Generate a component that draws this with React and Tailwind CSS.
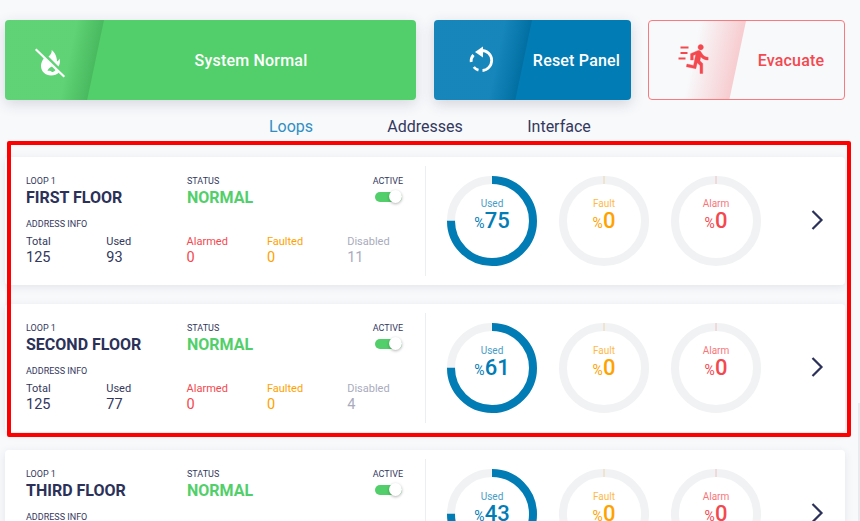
import React from "react";

const font = { fontFamily: "Roboto, 'Liberation Sans', sans-serif" };

function FlameOff() {
  return (
    <svg width="34" height="34" viewBox="0 0 34 34" className="text-white mt-[6px]">
      <path fill="currentColor" d="M18.700 4C19 7 17.500 9 15.500 10.500L25.500 20.500C27.500 17 27 15 26.500 12.500C26 14 25 15 24 15.500C24 11 22 6.500 18.700 4Z" />
      <path fill="currentColor" fillRule="evenodd" d="M10 13.500C8.500 16 8 18 8 20C8 25.500 12.500 29.500 18 29.500C21.500 29.500 24 28.300 26 26.500L11 12ZM14.500 25C15 22.500 17 21.500 19 20.500L22.500 24C21.500 25.500 20 26 19 26C18 25 16 24.500 14.500 25Z" />
      <path d="M2.700 3.300L31.300 30.700" stroke="currentColor" strokeWidth="2.200" fill="none" />
    </svg>
  );
}

function ReplayIcon() {
  return (
    <svg width="32" height="32" viewBox="0 0 32 32" fill="none" className="text-white">
      <path d="M18 2.500v11L10 8z" fill="currentColor" />
      <path d="M16.500 6.500C22 6.500 26.700 10.800 26.700 16.300C26.700 21.800 22.300 26.300 17.500 26.500" stroke="currentColor" strokeWidth="2.800" />
      <path d="M13.500 26.200C11.500 25.700 10 24.500 8.800 23" stroke="currentColor" strokeWidth="2.800" />
      <path d="M6.200 18C5.900 15.500 6.700 13 8.500 11" stroke="currentColor" strokeWidth="2.800" />
    </svg>
  );
}

function RunIcon() {
  return (
    <svg width="32" height="32" viewBox="0 0 32 32" className="text-[#f4484f]">
      <g transform="translate(4.500 -1.500) scale(1.350)" fill="currentColor" stroke="currentColor" strokeWidth="0.300">
        <path d="M13.490 5.480c1.100 0 2-.9 2-2s-.9-2-2-2-2 .9-2 2 .9 2 2 2zm-3.600 13.900l1-4.400 2.100 2v6h2v-7.500l-2.100-2 .6-3c1.300 1.500 3.300 2.500 5.500 2.500v-2c-1.900 0-3.500-1-4.300-2.400l-1-1.600c-.4-.6-1-1-1.700-1-.3 0-.5.1-.8.1l-5.200 2.200v4.700h2v-3.400l1.800-.7-1.600 8.100-4.900-1-.4 2 7 1.400z" />
      </g>
      <path d="M2.500 3.500h8M2.500 9h7M0.500 14.500h7" stroke="currentColor" strokeWidth="2" fill="none" />
    </svg>
  );
}

function Ring({ pct, arc, label, color, tick }) {
  const r = 41;
  const c = 2 * Math.PI * r;
  return (
    <div className="relative w-[90px] h-[90px] shrink-0">
      <svg width="90" height="90" viewBox="0 0 90 90">
        <circle cx="45" cy="45" r={r} fill="none" stroke="#f1f2f4" strokeWidth="8" />
        {arc > 0 ? (
          <circle
            cx="45"
            cy="45"
            r={r}
            fill="none"
            stroke={color}
            strokeWidth="8"
            strokeDasharray={`${(arc / 100) * c} ${c}`}
            transform="rotate(-90 45 45)"
          />
        ) : (
          <line x1="45" y1="0" x2="45" y2="8" stroke={tick} strokeWidth="0.8" />
        )}
      </svg>
      <div className="absolute inset-0 flex flex-col items-center pt-[22px]" style={{ color }}>
        <span className="text-[10px] leading-[12px] opacity-75">{label}</span>
        <span className="flex items-baseline leading-[24px] -mt-[1px]">
          <span className="text-[14px]">%</span>
          <span className="text-[22px] font-medium">{pct}</span>
        </span>
      </div>
    </div>
  );
}

function Stat({ label, value, className }) {
  return (
    <div className={className}>
      <div className="text-[11px] leading-[14px]">{label}</div>
      <div className="text-[14.500px] leading-[16px] mt-[1px]">{value}</div>
    </div>
  );
}

function LoopCard({ name, used, pct, disabled }) {
  return (
    <div className="h-[128px] mb-[18.5px] shrink-0 bg-white rounded-[4px] shadow-[0_2px_8px_rgba(40,45,80,0.10)] flex items-center pl-[21px] text-[#33385e]">
      <div className="w-[377px] shrink-0 self-start mt-[19px]">
        <div className="grid grid-cols-[161px_1fr_auto]">
          <div>
            <div className="text-[9px] leading-[10px] uppercase">Loop 1</div>
            <div className="text-[16px] leading-[20px] font-bold mt-[2px] text-[#2b3158]">{name}</div>
          </div>
          <div>
            <div className="text-[9px] leading-[10px] uppercase">Status</div>
            <div className="text-[16px] leading-[20px] font-bold mt-[2px] text-[#52cf6a]">NORMAL</div>
          </div>
          <div className="flex flex-col items-end">
            <div className="text-[9px] leading-[10px] uppercase">Active</div>
            <div className="relative w-[27px] h-[10px] mt-[6px] mr-[1px] rounded-full bg-[#52cf6a]">
              <div className="absolute right-0 top-[-2px] w-[13px] h-[13px] rounded-full bg-white shadow-[0_1px_3px_rgba(0,0,0,0.3)]" />
            </div>
          </div>
        </div>
        <div className="text-[9px] leading-[10px] uppercase mt-[11px]">Address info</div>
        <div className="grid grid-cols-[80.300px_80.300px_80.300px_80.300px_1fr] mt-[6px]">
          <Stat label="Total" value="125" />
          <Stat label="Used" value={used} />
          <Stat label="Alarmed" value="0" className="text-[#f4484f]" />
          <Stat label="Faulted" value="0" className="text-[#ffa200]" />
          <Stat label="Disabled" value={disabled} className="text-[#a9abbd]" />
        </div>
      </div>
      <div className="w-px h-[110px] bg-[#eceef1] ml-[22px] shrink-0" />
      <div className="flex gap-[22px] ml-[21px]">
        <Ring pct={pct} arc={75} label="Used" color="#027cb5" />
        <Ring pct={0} arc={0} label="Fault" color="#ffa200" tick="#f0cf9c" />
        <Ring pct={0} arc={0} label="Alarm" color="#f4484f" tick="#f0b5b8" />
      </div>
      <svg width="14" height="22" viewBox="0 0 14 22" fill="none" className="ml-[49px] shrink-0 -mt-[2px]">
        <path d="M2.500 2l9 9-9 9" stroke="#2b3158" strokeWidth="2.200" />
      </svg>
    </div>
  );
}

export default function App() {
  return (
    <div style={font} className="relative w-[860px] h-[521px] overflow-hidden bg-[#f8f9fb] flex flex-col pt-[20px] pl-[5px] pr-[15px]">
      <div className="flex h-[80px] shrink-0">
        <div className="relative w-[411px] flex items-center rounded-[4px] bg-[#52cf6a] shadow-[0_4px_14px_rgba(40,45,80,0.16)] overflow-hidden text-white">
          <div className="absolute inset-y-0 left-0 w-[99px] [clip-path:polygon(0_0,100%_0,83%_100%,0_100%)] bg-[linear-gradient(102deg,#ffffff14_62%,#0000001a_85%)]" />
          <div className="relative w-[90px] flex justify-center shrink-0"><FlameOff /></div>
          <div className="relative flex-1 text-center text-[16px] tracking-[0.2px] font-medium pr-[9px] pt-[2px]">System Normal</div>
        </div>
        <div className="relative w-[197px] ml-[18px] flex items-center rounded-[4px] bg-[#027cb5] shadow-[0_4px_14px_rgba(40,45,80,0.18)] overflow-hidden text-white">
          <div className="absolute inset-y-0 left-0 w-[98px] [clip-path:polygon(0_0,100%_0,83%_100%,0_100%)] bg-[linear-gradient(102deg,#ffffff14_62%,#0000001a_85%)]" />
          <div className="relative w-[94px] flex justify-center shrink-0"><ReplayIcon /></div>
          <div className="relative flex-1 text-center text-[16px] tracking-[0.2px] font-medium pr-[6px] pt-[2px]">Reset Panel</div>
        </div>
        <div className="relative w-[197px] ml-[17px] flex items-center rounded-[4px] border border-[#f9797e] overflow-hidden">
          <div className="absolute inset-y-0 left-0 w-[97px] [clip-path:polygon(0_0,100%_0,83%_100%,0_100%)] bg-[linear-gradient(102deg,transparent_45%,#f4484f40_85%)]" />
          <div className="relative w-[89px] flex justify-center shrink-0"><RunIcon /></div>
          <div className="relative flex-1 text-center text-[16px] tracking-[0.2px] font-medium text-[#f4484f] pt-[2px]">Evacuate</div>
        </div>
      </div>
      <div className="h-[57px] shrink-0 flex justify-center items-center text-[16px] text-[#33385e] pb-[4px]">
        <div className="w-[134px] text-center text-[#2f8fc4]">Loops</div>
        <div className="w-[134px] text-center">Addresses</div>
        <div className="w-[134px] text-center">Interface</div>
      </div>
      <LoopCard name="FIRST FLOOR" used="93" pct={75} disabled="11" />
      <LoopCard name="SECOND FLOOR" used="77" pct={61} disabled="4" />
      <LoopCard name="THIRD FLOOR" used="54" pct={43} disabled="9" />
      <div className="absolute left-[7px] top-[141px] w-[844px] h-[296px] border-4 border-[#ff0000] rounded-[2px]" />
      <div className="absolute right-0 top-[403px] bottom-0 w-[2px] bg-[#e9eaee]" />
    </div>
  );
}
